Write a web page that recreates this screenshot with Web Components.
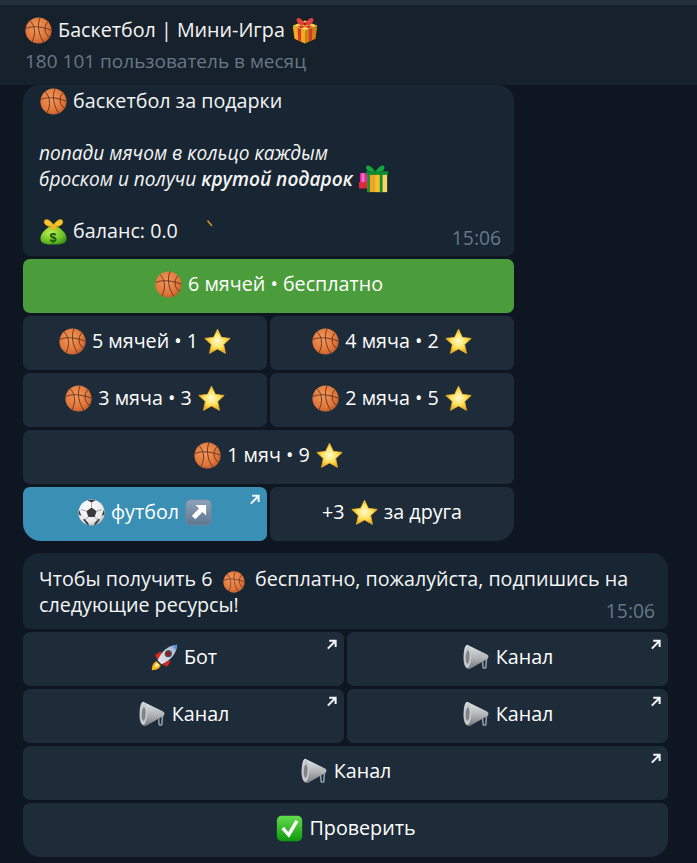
<!DOCTYPE html>
<html lang="ru">
<head>
<meta charset="utf-8">
<title>Баскетбол | Мини-Игра</title>
<style>
  html, body { margin: 0; background: #0e1621; }
  body { width: 697px; height: 863px; overflow: hidden; font-family: "Open Sans", "Noto Sans", sans-serif; color: #fff; }
</style>
</head>
<body>
<tg-chat></tg-chat>

<script>
// Dibujos de los emoji, todos en una caja de 32x32.
const BALL = `
  <defs><radialGradient id="b" cx=".42" cy=".38" r=".72"><stop offset="0" stop-color="#f2985a"/><stop offset=".65" stop-color="#e0763a"/><stop offset="1" stop-color="#b4552a"/></radialGradient></defs>
  <circle cx="16" cy="16" r="15.5" fill="url(#b)"/>
  <path d="M6 4.500C12 10 13 20 8.500 29M1 13.500C10 10 20 11.500 31 15.500M18 .6C14 8 16 22 22.500 30M27.500 5.500C22 10 22.500 21 29.500 24" fill="none" stroke="#55291a" stroke-width=".95"/>`;

const STAR = `
  <defs><radialGradient id="s" cx=".5" cy=".48" r=".55"><stop offset="0" stop-color="#fffbd0"/><stop offset=".55" stop-color="#ffe15c"/><stop offset="1" stop-color="#eda20e"/></radialGradient></defs>
  <path d="M16 1.500l4.600 9.600 10.400 1.300-7.700 7.200 2.100 10.400L16 24.800 6.600 30l2.100-10.400L1 12.400l10.400-1.300z" fill="url(#s)" stroke="#f0b428" stroke-width="1" stroke-linejoin="round"/>`;

const GIFT = `
  <path d="M2 11l14-6 14 6-14 6z" fill="#f7cf4e"/>
  <path d="M2 11l14 6v14.500L4 26z" fill="#f2ac1e"/>
  <path d="M30 11l-14 6v14.500L28 26z" fill="#c98412"/>
  <path d="M7.500 13.300l4 1.800v14.200l-3.300-1.800zM24.500 13.300l-4 1.800v14.200l3.300-1.800z" fill="#d8362f"/>
  <path d="M7.500 8.500l4-1.700 13 5.500-4 1.900zM24.500 8.500l-4-1.700-13 5.500 4 1.900z" fill="#d8362f"/>
  <path d="M16 9C12 1 5 .5 6.500 5.500 7.500 9 12 10 16 10c4 0 8.500-1 9.500-4.500C27 .5 20 1 16 9z" fill="#e0403c"/>
  <circle cx="16" cy="9" r="2" fill="#b02420"/>`;

const GIFTS = `
  <rect x="1" y="10" width="10" height="16" fill="#e0269a"/><rect x="3" y="10" width="3" height="16" fill="#ff6bc8"/>
  <rect x="0" y="20" width="9" height="7" fill="#e02a3a"/>
  <rect x="9" y="10" width="22" height="21" fill="#e8a52a"/>
  <rect x="25" y="10" width="6" height="21" fill="#f7d36a"/>
  <rect x="18" y="10" width="5" height="21" fill="#f2c02c"/>
  <rect x="9" y="10" width="3" height="21" fill="#18902a"/>
  <rect x="23" y="10" width="3" height="21" fill="#18902a"/>
  <path d="M18 9C13 0 7 0 8 5c.7 3.500 6 4 10 4s9.300-.5 10-4c1-5-5-5-10 4z" fill="#14a83c"/>
  <rect x="8" y="8" width="24" height="4" fill="#0f8a32"/>`;

const BAG = `
  <defs><radialGradient id="m" cx=".4" cy=".35" r=".8"><stop offset="0" stop-color="#bdf053"/><stop offset=".6" stop-color="#6cc226"/><stop offset="1" stop-color="#2f7a12"/></radialGradient></defs>
  <path d="M11 10C6 14 .5 18 .5 24.500c0 5.500 6 7 15.500 7s15.500-1.500 15.500-7C31.500 18 26 14 21 10z" fill="url(#m)"/>
  <path d="M16 8C11 .5 4.500 0 5 5c.4 4 6.500 6 11 4.500C20.500 11 26.600 9 27 5c.5-5-6-4.500-11 3z" fill="#f6c62d" stroke="#c98a10" stroke-width=".8"/>
  <path d="M14 8l-3 8 5-3.500 5 3.500-3-8z" fill="#f0b820"/>
  <text x="15.500" y="28.500" font-family="Liberation Sans, sans-serif" font-size="15" font-weight="700" fill="#14500c" text-anchor="middle">$</text>`;

const SOCCER = `
  <defs><radialGradient id="f" cx=".4" cy=".3" r=".8"><stop offset="0" stop-color="#fff"/><stop offset=".7" stop-color="#e8e8e8"/><stop offset="1" stop-color="#a8a8a8"/></radialGradient></defs>
  <circle cx="16" cy="16" r="15.500" fill="url(#f)"/>
  <path d="M16 10l6 4.400-2.300 7h-7.400l-2.300-7z" fill="#3a3a3c"/>
  <path d="M11 1.500l5 2.500 5-2.500C18 .5 14 .5 11 1.500zM1.500 13l2.500 7-3-1.500C.6 16.500.8 15 1.500 13zM30.500 13l-2.500 7 3-1.500c.4-2 .2-3.500-.5-5.500zM9 28l-3-3.500 1.500-1L12 28l1 3c-1.500-.2-3-1.300-4-3zM23 28l3-3.500-1.500-1L20 28l-1 3c1.500-.2 3-1.300 4-3z" fill="#3a3a3c"/>
  <path d="M16 4v6M10 14.400L4 12.500M22 14.400l6-1.900M12.300 21.400L8 25M19.700 21.400L24 25" stroke="#777" stroke-width=".8"/>`;

const ARROWBOX = `
  <defs><linearGradient id="a" x1="0" y1="0" x2="0" y2="1"><stop offset="0" stop-color="#8ea3bb"/><stop offset="1" stop-color="#5f7690"/></linearGradient></defs>
  <rect x="1" y="1" width="30" height="30" rx="5.500" fill="url(#a)" stroke="#7488a0"/>
  <path d="M12.500 7H25v12.500l-4.200-4.200-8.600 8.600-4.100-4.100 8.600-8.600z" fill="#fff"/>`;

const ROCKET = `
  <defs><linearGradient id="r" x1="0" y1="1" x2="1" y2="0"><stop offset="0" stop-color="#e8e8ee"/><stop offset=".6" stop-color="#c6cbd8"/><stop offset="1" stop-color="#7fa8d8"/></linearGradient></defs>
  <path d="M1 31c0-6 2-9 5.500-10.500l5 5C10 29 7 31 1 31z" fill="#f7b21c"/>
  <path d="M4.500 27.500c0-2 1-4 3-5l2 2c-1 2-3 3-5 3z" fill="#fff2a0"/>
  <path d="M5 13l6-4 2 1.500-5 9zM19 27l4-6-1.500-2-8.500 5z" fill="#d8281e"/>
  <path d="M8 19.500C12 9.500 20 1.500 31 1c-.5 11-8.500 19-18.500 23z" fill="url(#r)"/>
  <path d="M25 1.800c2-.5 4-.8 6-.8-.2 2-.6 4-1.200 6z" fill="#5a8fd0"/>
  <circle cx="20.500" cy="11.500" r="3.600" fill="#8c1f1f" stroke="#47505e" stroke-width="1.300"/>`;

// Megáfono: boca a la izquierda y el asa abajo a la derecha.
const HORN = `
  <defs><linearGradient id="h" x1="0" y1="0" x2="0" y2="1"><stop offset="0" stop-color="#e4e6e7"/><stop offset=".5" stop-color="#b4b8bb"/><stop offset="1" stop-color="#777b7e"/></linearGradient></defs>
  <path d="M23 19l1 9.500M28 16l-1 12.500M23.500 28.500h4" fill="none" stroke="#8ea0ad" stroke-width="1.800"/>
  <path d="M5 1l23 11c2 1 2.500 2.500 2 4-.5 2-2 3-5.500 4L8 29.500C3 30.500 0 23 .6 15 1 8 2 1.500 5 1z" fill="url(#h)"/>
  <ellipse cx="5.500" cy="15.500" rx="4.300" ry="13" fill="#c6cacc" transform="rotate(3 5.500 15.500)"/>
  <ellipse cx="5.500" cy="15.500" rx="2.300" ry="8" fill="#7f8487" transform="rotate(3 5.500 15.500)"/>`;

const CHECK = `
  <defs><linearGradient id="c" x1="0" y1="0" x2="0" y2="1"><stop offset="0" stop-color="#62dc4c"/><stop offset="1" stop-color="#0d9a0d"/></linearGradient></defs>
  <rect x="1" y="1" width="30" height="30" rx="5.500" fill="url(#c)"/>
  <path d="M6.500 17l3-3 5 6L23 6l3.500 2L15.500 27z" fill="#fff"/>`;

const EMOJIS = { ball: BALL, star: STAR, gift: GIFT, gifts: GIFTS, bag: BAG, soccer: SOCCER, arrowbox: ARROWBOX, rocket: ROCKET, horn: HORN, check: CHECK };

class TgEmoji extends HTMLElement {
  connectedCallback() {
    const size = this.getAttribute('size') || 27;
    this.attachShadow({ mode: 'open' }).innerHTML = `
      <style>
        :host { display: inline-block; width: ${size}px; height: ${size}px; margin: -5px 1px; vertical-align: -2px; }
        svg { display: block; width: 100%; height: 100%; }
      </style>
      <svg viewBox="0 0 32 32">${EMOJIS[this.getAttribute('name')]}</svg>`;
  }
}

// Cabecera del chat.
class TgHeader extends HTMLElement {
  connectedCallback() {
    this.attachShadow({ mode: 'open' }).innerHTML = `
      <style>
        :host { display: block; margin-top: 5px; height: 80px; box-sizing: border-box; padding: 11px 24px 0; background: #17212b; box-shadow: 0 -5px 0 #242f3d; }
        .title { font-size: 19.700px; line-height: 28px; font-weight: 500; color: #f5f5f5; }
        .sub { margin-top: 5px; padding-left: 1px; font-size: 19px; line-height: 24px; color: #667887; }
      </style>
      <div class="title"><slot name="title"></slot></div>
      <div class="sub"><slot name="sub"></slot></div>`;
  }
}

// Burbuja de mensaje; la hora va encima, abajo a la derecha.
class TgBubble extends HTMLElement {
  connectedCallback() {
    this.attachShadow({ mode: 'open' }).innerHTML = `
      <style>
        :host { display: block; position: relative; background: #182533; border-radius: 16px 16px 7px 7px; font-size: 19.700px; line-height: 26px; color: #f5f5f5; }
        .time { position: absolute; right: 13px; bottom: 6px; font-size: 19.300px; line-height: 24px; color: #667887; }
      </style>
      <slot></slot>
      <span class="time">${this.getAttribute('time')}</span>`;
  }
}

// Botón del teclado; "link" le pone la flecha de la esquina.
class TgButton extends HTMLElement {
  connectedCallback() {
    const link = this.hasAttribute('link');
    this.attachShadow({ mode: 'open' }).innerHTML = `
      <style>
        :host { display: flex; position: relative; box-sizing: border-box; padding-bottom: 4px; align-items: center; justify-content: center; height: 54px; background: var(--key, #1e2c3a); border-radius: var(--corners, 7px); font-size: 19.700px; font-weight: 500; line-height: 26px; color: #fff; white-space: nowrap; }
        svg { position: absolute; top: 7px; right: 7px; width: 11px; height: 11px; }
      </style>
      <span><slot></slot></span>
      ${link ? '<svg viewBox="0 0 12 12"><path d="M2 10.500L10 2.500M3.500 1.800h7v7" fill="none" stroke="#f2f5f7" stroke-width="2.200"/></svg>' : ''}`;
  }
}

class TgRow extends HTMLElement {
  connectedCallback() {
    this.attachShadow({ mode: 'open' }).innerHTML = `
      <style>
        :host { display: grid; grid-auto-flow: column; grid-auto-columns: 1fr; gap: 3px; margin-top: 3px; }
      </style>
      <slot></slot>`;
  }
}

class TgChat extends HTMLElement {
  connectedCallback() {
    this.attachShadow({ mode: 'open' }).innerHTML = `
      <style>
        :host { display: block; }
        .msg { margin-left: 23px; }
        .first { width: 491px; }
        .second { width: 645px; margin-top: 12px; }
        .text { padding: 3px 16px 12px; position: relative; }
        .second .text { padding: 13px 16px 11px; }
        .inline-ball { margin: -5px 0; }
        .mark { position: absolute; left: 184px; top: 135px; width: 6px; height: 7px; }
        i { font-size: 19.100px; }
        b { font-weight: 600; }
        .last-l { --corners: 7px 7px 7px 18px; --key: #3a8fb5; }
        .last-r { --corners: 7px 7px 18px 7px; }
        .both { --corners: 7px 7px 18px 18px; }
        .green { --key: #4a9d3a; }
        .blank { height: 26px; }
      </style>
      <tg-header>
        <span slot="title"><tg-emoji name="ball"></tg-emoji> Баскетбол | Мини-Игра <tg-emoji name="gift" size="28"></tg-emoji></span>
        <span slot="sub">180 101 пользователь в месяц</span>
      </tg-header>

      <div class="msg first">
        <tg-bubble time="15:06">
          <div class="text">
            <div><tg-emoji name="ball"></tg-emoji> баскетбол за подарки</div>
            <div class="blank"></div>
            <div><i>попади мячом в кольцо каждым</i></div>
            <div><i>броском и получи <b>крутой подарок</b></i> <tg-emoji name="gifts" size="29"></tg-emoji></div>
            <div class="blank"></div>
            <div><tg-emoji name="bag"></tg-emoji> баланс: 0.0</div>
            <svg class="mark" viewBox="0 0 6 7"><path d="M.5.5L5 6" stroke="#e0a020" stroke-width="1.300"/></svg>
          </div>
        </tg-bubble>
        <tg-row><tg-button class="green"><tg-emoji name="ball"></tg-emoji> 6 мячей • бесплатно</tg-button></tg-row>
        <tg-row>
          <tg-button><tg-emoji name="ball"></tg-emoji> 5 мячей • 1 <tg-emoji name="star"></tg-emoji></tg-button>
          <tg-button><tg-emoji name="ball"></tg-emoji> 4 мяча • 2 <tg-emoji name="star"></tg-emoji></tg-button>
        </tg-row>
        <tg-row>
          <tg-button><tg-emoji name="ball"></tg-emoji> 3 мяча • 3 <tg-emoji name="star"></tg-emoji></tg-button>
          <tg-button><tg-emoji name="ball"></tg-emoji> 2 мяча • 5 <tg-emoji name="star"></tg-emoji></tg-button>
        </tg-row>
        <tg-row><tg-button><tg-emoji name="ball"></tg-emoji> 1 мяч • 9 <tg-emoji name="star"></tg-emoji></tg-button></tg-row>
        <tg-row>
          <tg-button class="last-l" link><tg-emoji name="soccer"></tg-emoji> футбол <tg-emoji name="arrowbox"></tg-emoji></tg-button>
          <tg-button class="last-r">+3 <tg-emoji name="star"></tg-emoji> за друга</tg-button>
        </tg-row>
      </div>

      <div class="msg second">
        <tg-bubble time="15:06">
          <div class="text">Чтобы получить 6 &nbsp;<tg-emoji class="inline-ball" name="ball" size="22"></tg-emoji>&nbsp; бесплатно, пожалуйста, подпишись на<br>следующие ресурсы!</div>
        </tg-bubble>
        <tg-row>
          <tg-button link><tg-emoji name="rocket"></tg-emoji> Бот</tg-button>
          <tg-button link><tg-emoji name="horn"></tg-emoji> Канал</tg-button>
        </tg-row>
        <tg-row>
          <tg-button link><tg-emoji name="horn"></tg-emoji> Канал</tg-button>
          <tg-button link><tg-emoji name="horn"></tg-emoji> Канал</tg-button>
        </tg-row>
        <tg-row><tg-button link><tg-emoji name="horn"></tg-emoji> Канал</tg-button></tg-row>
        <tg-row><tg-button class="both"><tg-emoji name="check"></tg-emoji> Проверить</tg-button></tg-row>
      </div>`;
  }
}

customElements.define('tg-emoji', TgEmoji);
customElements.define('tg-header', TgHeader);
customElements.define('tg-bubble', TgBubble);
customElements.define('tg-button', TgButton);
customElements.define('tg-row', TgRow);
customElements.define('tg-chat', TgChat);
</script>
</body>
</html>
